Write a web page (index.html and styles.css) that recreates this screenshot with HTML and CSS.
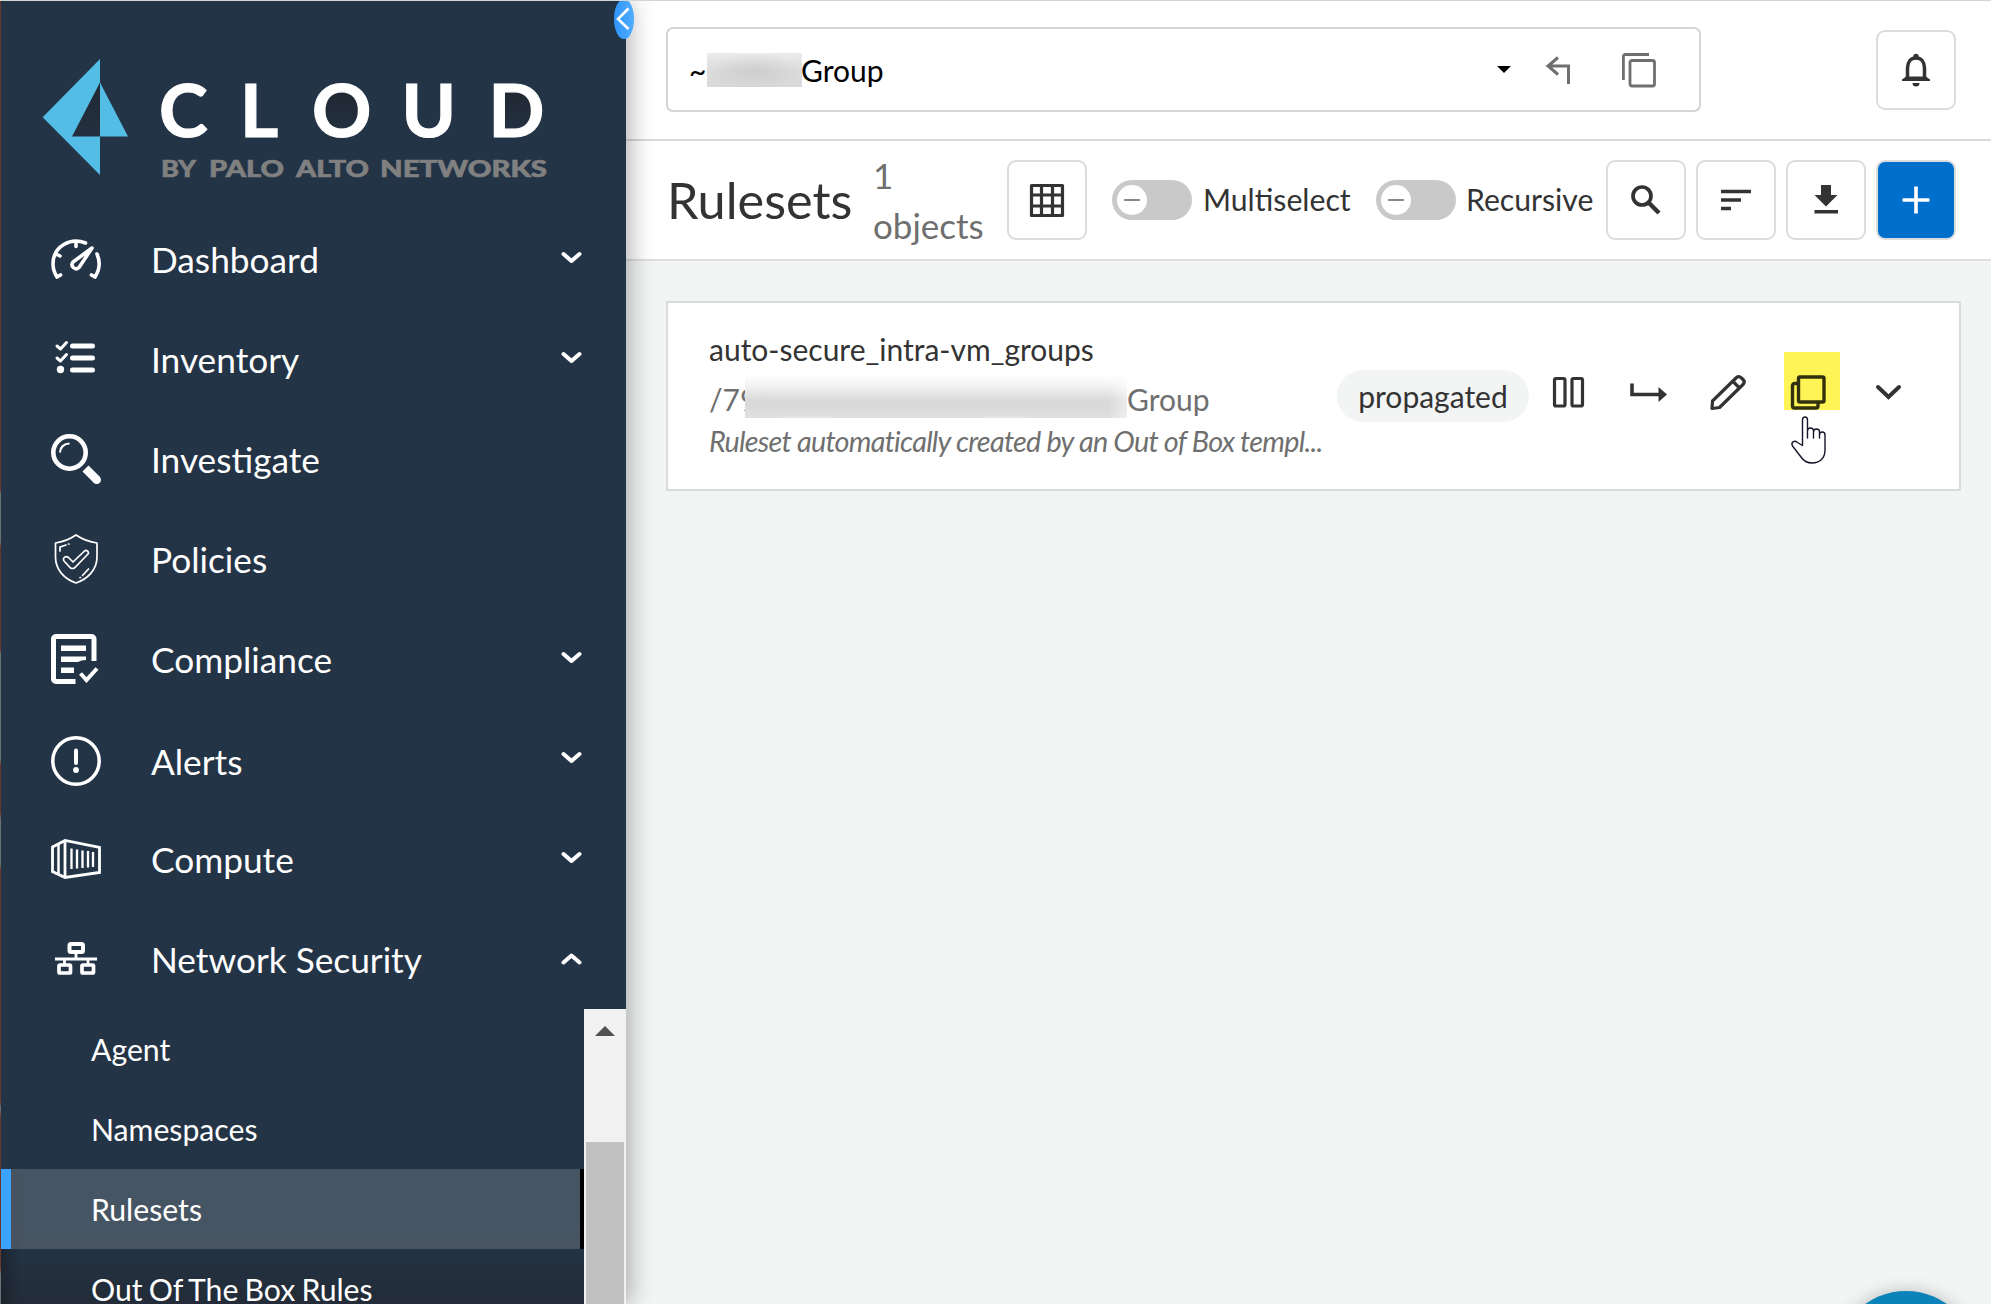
FILE: index.html
```html
<!DOCTYPE html>
<html lang="en">
<head>
<meta charset="utf-8">
<title>Rulesets</title>
<link rel="stylesheet" href="styles.css">
</head>
<body>
<div class="app">
  <aside class="sidebar">
    <div class="brand">
      <svg class="logo" width="520" height="130" viewBox="40 55 520 130">
        <defs><linearGradient id="inner" x1="0" y1="0" x2="0" y2="1"><stop offset="0" stop-color="#212833"/><stop offset="1" stop-color="#23303f"/></linearGradient></defs>
        <path d="M100 59 42.7 117.3 100 175z" fill="#53bde5"/>
        <path d="M100 82.500 72 136.500h28z" fill="url(#inner)"/>
        <path d="M100 82.500v54h28z" fill="#53bde5"/>
        <ellipse cx="343" cy="110" rx="20" ry="19" fill="url(#inner)"/>
        <path d="M502 92h12q20 2 20 18t-20 18h-12z" fill="url(#inner)"/>
        <text class="logo-name" x="159 240 312 401.500 488.500" y="137">CLOUD</text>
        <text class="logo-by" y="176.800"><tspan x="161" textLength="35" lengthAdjust="spacingAndGlyphs">BY</tspan><tspan x="209" textLength="75" lengthAdjust="spacingAndGlyphs">PALO</tspan><tspan x="296" textLength="73" lengthAdjust="spacingAndGlyphs">ALTO</tspan><tspan x="380" textLength="167" lengthAdjust="spacingAndGlyphs">NETWORKS</tspan></text>
      </svg>
    </div>
    <button class="collapse" aria-label="Collapse"><svg width="20" height="40" viewBox="0 0 20 40"><path d="M14.500 9.500 4 20l10.500 10"/></svg></button>
    <nav class="menu">
      <a class="item">
        <svg class="icon" viewBox="0 0 50 50"><g fill="none" stroke="#fff" stroke-width="3.600" stroke-linecap="round" stroke-linejoin="round"><path d="M34.500 9C20 3 2 12 2 30c0 5 1.500 9 4 13l3.500-2M25 8v4.500M5 20l4 2M46 20c3.500 8 2.500 16-2 23l-3.500-2"/><path d="m41 14-19 14c-3 4 2 9 6 5.500z"/></g></svg>
        <span>Dashboard</span><svg class="chev" viewBox="0 0 20 14"><path d="m2 3 8 7 8-7"/></svg></a>
      <a class="item">
        <svg class="icon" viewBox="0 0 50 50"><g fill="none" stroke="#fff" stroke-linecap="round"><path d="M21.500 12h20M21.500 24h20M21.500 36h20" stroke-width="5"/><path d="m6 12 3.500 3 6-6.500M6 24l3.500 3 6-6.500" stroke-width="3" stroke-linejoin="round"/></g><circle cx="9.500" cy="35.500" r="3.700" fill="#fff"/></svg>
        <span>Inventory</span><svg class="chev" viewBox="0 0 20 14"><path d="m2 3 8 7 8-7"/></svg></a>
      <a class="item">
        <svg class="icon" viewBox="0 0 50 50"><g fill="none" stroke="#fff"><circle cx="18.500" cy="18.500" r="16.200" stroke-width="4.600"/><path d="M9 18.500c0-5 4-9 9.500-9" stroke-width="2.200"/><path d="m34.500 34.500 11 11" stroke-width="8.500"/></g><circle cx="45.700" cy="45.700" r="4.300" fill="#fff"/></svg>
        <span>Investigate</span></a>
      <a class="item">
        <svg class="icon" viewBox="0 0 50 50"><g fill="none" stroke="#fff" stroke-width="1.700" stroke-linecap="round" stroke-linejoin="round"><path d="M25 1C19 5 12 8 4.500 9v14c0 13 9 22 20.500 26 11.500-4 21-13 21-26V9C38 8 31 5 25 1z"/><path d="m14 23c-2 1-2 3-.5 4.500l6 6.500q2 1 4 0L37 20c1.500-2-1.500-4.500-3.500-3L22 28l-4.500-4.500q-2-1.500-3.500-.5zM9 17v-4l6-2M17.500 10h.5M37.500 35l-6 6.500M29 43.500h.5" /></g></svg>
        <span>Policies</span></a>
      <a class="item">
        <svg class="icon" viewBox="0 0 50 50"><path d="M24.500 47.500H5A2.500 2.500 0 0 1 2.500 45V5A2.500 2.500 0 0 1 5 2.500h35.500A2.500 2.500 0 0 1 43 5v22" fill="none" stroke="#fff" stroke-width="5"/><path d="M10 11.500h25V17H10zM10 22.500h25V26q-5 0-8 2H10zM10 33.500h13V39H10z" fill="#fff"/><path d="m29.500 39.500 6 6.500 10.500-11.500" fill="none" stroke="#fff" stroke-width="4"/></svg>
        <span>Compliance</span><svg class="chev" viewBox="0 0 20 14"><path d="m2 3 8 7 8-7"/></svg></a>
      <a class="item alerts">
        <svg class="icon" viewBox="0 0 50 50"><g fill="none" stroke="#fff" stroke-linecap="round"><circle cx="25" cy="25" r="23.200" stroke-width="3.500"/><path d="M25 14.500V27" stroke-width="4"/></g><circle cx="25" cy="34" r="2.900" fill="#fff"/></svg>
        <span>Alerts</span><svg class="chev" viewBox="0 0 20 14"><path d="m2 3 8 7 8-7"/></svg></a>
      <a class="item">
        <svg class="icon" viewBox="0 0 50 50"><g fill="none" stroke="#fff"><path d="M1.500 13 14 6.500l34.500 7V38.500L14 43.500 1.500 37.500zM14 6v38" stroke-width="2.800"/><path d="M7.500 10v31" stroke-width="2.500"/><path d="M20.500 14.500V35M26 15.500V34.500M31.500 16.500V34M37 17V33.500M42 18V33" stroke-width="2.300"/></g></svg>
        <span>Compute</span><svg class="chev" viewBox="0 0 20 14"><path d="m2 3 8 7 8-7"/></svg></a>
      <a class="item open">
        <svg class="icon" viewBox="0 0 50 50"><g fill="none" stroke="#fff"><rect x="18.500" y="10" width="13.500" height="8" rx="1.500" stroke-width="4"/><rect x="8" y="31" width="11.500" height="8" rx="1" stroke-width="3.700"/><rect x="31" y="31" width="11.500" height="8" rx="1" stroke-width="3.700"/><path d="M4 25h42M25 19v6M13.500 25v5M37 25v5" stroke-width="2.800"/></g></svg>
        <span>Network Security</span><svg class="chev" viewBox="0 0 20 14"><path d="m2 11.500 8-7 8 7"/></svg></a>
    </nav>
    <div class="submenu">
      <div class="sublist">
        <a class="sub">Agent</a>
        <a class="sub">Namespaces</a>
        <a class="sub active">Rulesets</a>
        <a class="sub fade">Out Of The Box Rules</a>
      </div>
      <div class="scrollbar"><i class="up"></i><i class="thumb"></i></div>
    </div>
  </aside>

  <main class="main">
    <header class="topbar">
      <div class="picker">
        <span class="tilde">~</span><span class="mask short"></span><span class="picker-text">Group</span>
        <svg class="caret" width="14" height="8" viewBox="0 0 14 8"><path d="M0 0h14L7 7z"/></svg>
        <svg class="back" width="28" height="30" viewBox="0 0 28 30"><path d="M13 2.500 3 11l10 8.500M3 11h20.500V29" fill="none" stroke="#6f6f6f" stroke-width="3"/></svg>
        <svg class="dup" width="36" height="36" viewBox="0 0 36 36"><g fill="none" stroke="#6f6f6f" stroke-width="2.800"><rect x="9" y="8.500" width="24.500" height="25.500" rx="2"/><path d="M2.400 28V4.500a2 2 0 0 1 2-2H28"/></g></svg>
      </div>
      <button class="btn bell"><svg width="36" height="36" viewBox="0 0 36 36"><path d="M9.500 28V16c0-6 3-10 8.500-10s8.500 4 8.500 10v12" fill="none" stroke="#333" stroke-width="3.500"/><path d="M4 27.500l4-3h20l4 3v1.500H4zM14.500 31h7a3.500 3.500 0 0 1-7 0z" fill="#333"/><circle cx="18" cy="4.500" r="2.700" fill="#333"/></svg></button>
    </header>
    <section class="toolbar">
      <h1>Rulesets</h1>
      <p class="count">1 objects</p>
      <button class="btn grid"><svg width="36" height="36" viewBox="0 0 36 36"><path d="M2.500 3.500h31v30h-31zM12.500 3v31M23.500 3v31M2 13h32M2 24h32" fill="none" stroke="#333" stroke-width="3.200" stroke-linejoin="round"/></svg></button>
      <span class="toggle"><i></i></span><span class="toggle-label">Multiselect</span>
      <span class="toggle"><i></i></span><span class="toggle-label">Recursive</span>
      <div class="actions">
        <button class="btn"><svg width="36" height="36" viewBox="0 0 36 36"><circle cx="14" cy="14" r="9" fill="none" stroke="#333" stroke-width="3.700"/><path d="m20.500 20.500 10.500 10.500" stroke="#333" stroke-width="4.400"/></svg></button>
        <button class="btn"><svg width="36" height="36" viewBox="0 0 36 36"><path d="M3 9.500h30M3 18h20M3 26.500h10" stroke="#333" stroke-width="3.400"/></svg></button>
        <button class="btn"><svg width="36" height="36" viewBox="0 0 36 36"><path d="M13 3h10v10h6.500L18 24.500 6.500 13H13zM6.500 28h23.500v3.400H6.500z" fill="#333"/></svg></button>
        <button class="btn primary"><svg width="36" height="36" viewBox="0 0 36 36"><path d="M18 4.500v27M4.500 18h27" stroke="#fff" stroke-width="3.600"/></svg></button>
      </div>
    </section>
    <section class="content">
      <article class="card">
        <div class="info">
          <div class="name">auto-secure_intra-vm_groups</div>
          <div class="path"><span class="prefix">/79</span><span class="mask long"></span><span>Group</span></div>
          <div class="desc">Ruleset automatically created by an Out of Box templ...</div>
        </div>
        <span class="pill">propagated</span>
        <div class="tools">
          <svg viewBox="0 0 40 40"><g fill="none" stroke="#333" stroke-width="3.200"><rect x="5.500" y="6.500" width="10.500" height="27.500" rx="1.500"/><rect x="23" y="6.500" width="10.500" height="27.500" rx="1.500"/></g></svg>
          <svg viewBox="0 0 40 40"><path d="M3 11.500V22.500H33" fill="none" stroke="#333" stroke-width="3.600"/><path d="m29.500 15 8.500 7.500-8.500 7.500z" fill="#333"/></svg>
          <svg viewBox="0 0 40 40"><path d="M3 36.500 3.500 29 27.500 5.500q2.500-2 5 .5l1.500 1.500q2.500 2.500 0 5L10.500 35.500zM24 9.500l6.500 6.500" fill="none" stroke="#333" stroke-width="3.200" stroke-linejoin="round"/></svg>
          <span class="hot"><svg viewBox="0 0 40 40"><g fill="none" stroke="#31300f" stroke-width="3.400" stroke-linejoin="round"><rect x="9.500" y="5" width="25.500" height="25" rx="1.500"/><path d="M8.500 11.500H5.500a2 2 0 0 0-2 2V34a2 2 0 0 0 2 2h21.500a2 2 0 0 0 2-2v-3"/></g></svg>
          <svg class="hand" viewBox="0 0 38 48"><path d="M12.500 29.500V4c0-4 5-4 5 0v18-7c0-4 6-4 6 0v7-6c0-4 6-4 6 0v6-3c0-4 5.500-4 5.500 0v15c0 8-5 13-13 13-5 0-9-3-11-6L2.500 30c-2-4 2-6 5-3.500z" fill="#fff" stroke="#15152b" stroke-width="1.400" stroke-linejoin="round"/></svg></span>
          <svg viewBox="0 0 40 40"><path d="m9 15 10.500 10L30 15" fill="none" stroke="#333" stroke-width="4" stroke-linecap="round"/></svg>
        </div>
      </article>
    </section>
  </main>
  <div class="help"></div>
</div>
</body>
</html>
```
FILE: styles.css
```css
* { box-sizing: border-box; }
body { margin: 0; font-family: Lato, "Liberation Sans", sans-serif; color: #333; overflow: hidden; }
h1, p { margin: 0; font-weight: 400; }
button { padding: 0; font: inherit; }
svg { display: block; flex: none; }

.app { display: flex; width: 1991px; height: 1304px; position: relative; overflow: hidden; border-top: 1px solid #d3d6d6; }

.sidebar { position: relative; z-index: 2; flex: none; width: 626px; height: 1304px; background: #243447; box-shadow: 3px 0 24px rgba(0, 0, 0, .33); }
.sidebar::before { content: ""; position: absolute; z-index: 2; left: 0; top: 0; width: 1px; height: 100%; background: linear-gradient(#6b382d 488px, #6a7477 494px 540px, #6b382d 547px 648px, #6a7477 654px 758px, #6b382d 764px 812px, #6a7477 818px 862px, #6b382d 870px 1100px, #6a7477 1108px, #6b382d 1116px 1266px, #6a7477 1274px); }
.brand { height: 208px; padding: 54px 0 0 40px; }
.logo-name { font-size: 73.500px; font-weight: 700; fill: #fff; stroke: #fff; stroke-width: 1.200px; }
.logo-by { font-size: 22.500px; font-weight: 900; fill: #808080; stroke: #808080; stroke-width: .6px; }
.collapse { position: absolute; left: 614px; top: -2px; width: 20px; height: 40px; border: 0; border-radius: 50%; background: linear-gradient(90deg, #2f95fa, #50adff); }
.collapse path { fill: none; stroke: #fff; stroke-width: 2.600; }

.item { display: flex; align-items: center; height: 100px; padding: 0 44px 0 51px; color: #fff; font-size: 35.250px; line-height: 98px; }
.item .icon { width: 50px; height: 50px; margin-right: 50px; }
.item span { flex: 1; padding-top: 2px; white-space: nowrap; }
.alerts .icon, .alerts span { position: relative; top: 2px; }
.chev { width: 21px; height: 14px; position: relative; top: -1px; }
.chev path { fill: none; stroke: #fff; stroke-width: 4; stroke-linecap: round; stroke-linejoin: round; }

.submenu { display: flex; height: 295px; overflow: hidden; }
.sublist { flex: 1; }
.sub { display: block; height: 80px; padding-left: 91px; color: #fff; font-size: 30.200px; line-height: 80px; white-space: nowrap; word-spacing: -1.600px; }
.sub.active { padding-left: 80px; margin-left: 1px; background: linear-gradient(90deg, rgba(71, 80, 92, .8), rgba(71, 86, 100, 0) 14px), linear-gradient(#465564 70%, #485461); border-left: 10px solid #3aa3ff; border-right: 4px solid #000; }
.sub.fade { background: linear-gradient(90deg, rgba(20, 25, 32, .5), transparent 20px), linear-gradient(#233242, #232c38 55px); }
.scrollbar { width: 42px; padding: 17px 2px 0; background: #f1f1f1; }
.scrollbar i { display: block; }
.up { width: 20px; height: 10px; margin: 0 auto 106px; background: #505050; clip-path: polygon(50% 0, 100% 100%, 0 100%); }
.thumb { height: 170px; background: #c1c1c1; }

.main { flex: 1; min-width: 0; background: #f3f5f5; }
.topbar { display: flex; justify-content: space-between; height: 140px; padding: 26px 35px 0 40px; background: #fff; border-bottom: 2px solid #d9d9d9; }
.picker { display: flex; align-items: center; width: 1035px; height: 85px; padding: 0 42px 0 21px; border: 2px solid #d5d5d5; border-radius: 7px; color: #000; font-size: 30px; }
.tilde { width: 18px; }
.mask { flex: none; }
.short { width: 95px; height: 34px; background: radial-gradient(ellipse at 50% 55%, rgba(200, 200, 200, .7), transparent 70%), linear-gradient(#ececec, #dcdcdc 50%, #d9d9d9); }
.picker-text { flex: 1; margin-left: -1px; }
.caret { margin-right: 34px; }
.back { margin-right: 48px; }
.btn { display: flex; align-items: center; justify-content: center; flex: none; width: 80px; height: 80px; background: #fff; border: 2px solid #dcdcdc; border-radius: 9px; }
.bell { margin-top: 3px; }

.toolbar { display: flex; align-items: center; height: 120px; padding: 0 35px 0 41px; background: #fff; border-bottom: 2px solid #dfdfdf; }
.toolbar h1 { flex: none; width: 206px; font-size: 50.400px; line-height: 60px; }
.count { flex: none; width: 115px; margin-right: 19px; font-size: 35px; line-height: 50px; color: #6f6f6f; }
.toggle { flex: none; width: 80px; height: 40px; margin-left: 25px; padding: 5px; border-radius: 20px; background: #c9c9c9; }
.toggle i { display: flex; width: 30px; height: 30px; border-radius: 50%; background: #fff; align-items: center; justify-content: center; }
.toggle i::before { content: ""; width: 16px; height: 2px; background: #888; }
.toggle-label { flex: none; margin-left: 11px; width: 148px; padding-bottom: 2px; font-size: 30.200px; line-height: 38px; white-space: nowrap; }
.toggle-label:nth-of-type(4) { width: 130px; margin-left: 10px; }
.actions { display: flex; gap: 10px; margin-left: auto; }
.primary { background: #006fcc; }

.content { padding: 40px 30px 0 40px; }
.card { display: flex; width: 1295px; height: 190px; padding: 0 0 0 41px; background: #fff; border: 2px solid #dadcdc; }
.info { flex: none; width: 614px; padding-top: 26px; white-space: nowrap; }
.name { font-size: 30px; line-height: 40px; }
.path { display: flex; align-items: center; height: 60px; font-size: 30px; color: #6f6f6f; }
.prefix { width: 36px; overflow: hidden; }
.long { width: 382px; height: 44px; margin-bottom: 7px; background: radial-gradient(ellipse at 16% 105%, rgba(255, 255, 255, .4), transparent 9%), radial-gradient(ellipse at 68% 105%, rgba(255, 255, 255, .4), transparent 9%), linear-gradient(90deg, transparent 95%, rgba(255, 255, 255, .5)), linear-gradient(#fff, #f4f4f4 25%, #d9d9d9 60% 72%, #e0e0e0); }
.desc { font-size: 28.800px; line-height: 24px; font-style: italic; letter-spacing: -.74px; word-spacing: -.1px; color: #6f6f6f; }
.pill { flex: none; width: 192px; height: 52px; margin: 67px 0 0 14px; border-radius: 26px; background: #f3f5f5; font-size: 30px; line-height: 52px; text-align: center; }
.tools { display: flex; gap: 40px; margin: 69px 0 0 20px; }
.tools svg { width: 40px; height: 40px; }
.hot { position: relative; width: 40px; height: 40px; }
.hot::before { content: ""; position: absolute; left: -5px; top: -20px; width: 56px; height: 58px; background: #fff456; }
.hot svg { position: relative; }
.tools .hand { position: absolute; left: 1px; top: 44px; width: 38px; height: 48px; }
.help { position: absolute; z-index: 3; left: 1836px; top: 1290px; width: 140px; height: 140px; border-radius: 50%; background: #0b82b9; box-shadow: 0 2px 18px rgba(0, 0, 0, .3); }
```
